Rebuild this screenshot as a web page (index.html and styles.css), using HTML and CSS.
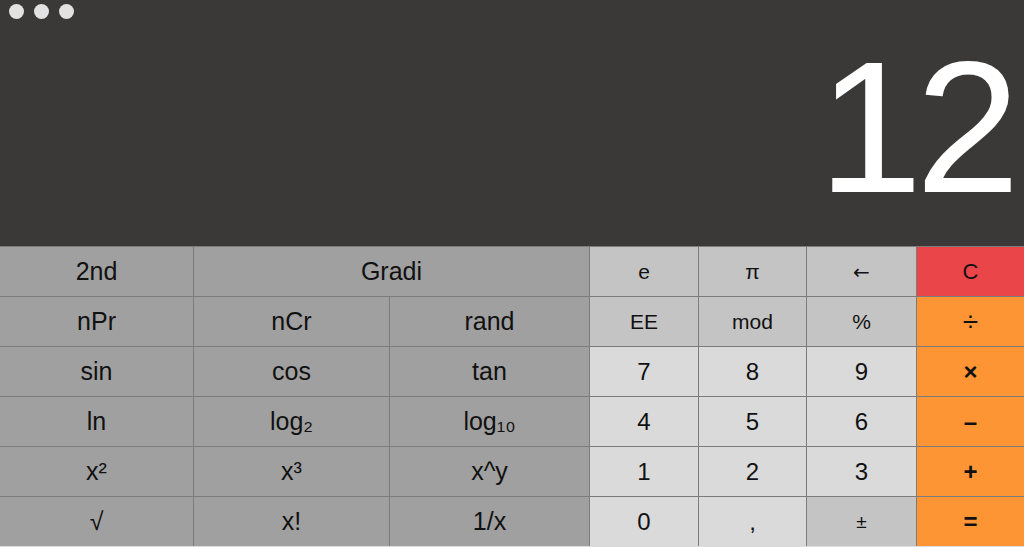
FILE: index.html
```html
<!DOCTYPE html>
<html lang="it">

<head>
    <meta charset="UTF-8">
    <meta name="viewport" content="width=device-width, initial-scale=1.0">
    <title>Calcolatrice</title>
    <link rel="stylesheet" href="styles.css">
</head>

<body>
    <div class="calc">
        <div class="display">
            <div class="dots">
                <span class="dot"></span>
                <span class="dot"></span>
                <span class="dot"></span>
            </div>
            <div class="value">12</div>
        </div>
        <div class="keys">
            <!-- riga 1 -->
            <div class="key fn">2nd</div>
            <div class="key fn wide">Gradi</div>
            <div class="key op small">e</div>
            <div class="key op small">π</div>
            <div class="key op arrow">←</div>
            <div class="key clear">C</div>
            <!-- riga 2 -->
            <div class="key fn">nPr</div>
            <div class="key fn">nCr</div>
            <div class="key fn">rand</div>
            <div class="key op small">EE</div>
            <div class="key op small">mod</div>
            <div class="key op small">%</div>
            <div class="key orange big">÷</div>
            <!-- riga 3 -->
            <div class="key fn">sin</div>
            <div class="key fn">cos</div>
            <div class="key fn">tan</div>
            <div class="key num">7</div>
            <div class="key num">8</div>
            <div class="key num">9</div>
            <div class="key orange bold">×</div>
            <!-- riga 4 -->
            <div class="key fn">ln</div>
            <div class="key fn">log₂</div>
            <div class="key fn">log₁₀</div>
            <div class="key num">4</div>
            <div class="key num">5</div>
            <div class="key num">6</div>
            <div class="key orange bold">–</div>
            <!-- riga 5 -->
            <div class="key fn">x²</div>
            <div class="key fn">x³</div>
            <div class="key fn">x^y</div>
            <div class="key num">1</div>
            <div class="key num">2</div>
            <div class="key num">3</div>
            <div class="key orange bold">+</div>
            <!-- riga 6 -->
            <div class="key fn">√</div>
            <div class="key fn">x!</div>
            <div class="key fn">1/x</div>
            <div class="key num">0</div>
            <div class="key num">,</div>
            <div class="key op tiny">±</div>
            <div class="key orange bold">=</div>
        </div>
    </div>
</body>

</html>
```

FILE: styles.css
```css
body {
    margin: 0;
    font-family: 'Liberation Sans', Arial, sans-serif;
    background: #dcdcdc;
    overflow: hidden;
}

.calc {
    width: 1024px;
    display: flex;
    flex-direction: column;
}

/* area display */
.display {
    height: 246px;
    background-color: #3a3937;
    display: flex;
    flex-direction: column;
    box-sizing: border-box;
}

.dots {
    display: flex;
    gap: 10px;
    padding: 4px 0 0 9px;
}

.dot {
    width: 15px;
    height: 15px;
    border-radius: 50%;
    background-color: #e2e2e2;
}

.value {
    margin-top: auto;
    text-align: right;
    color: #ffffff;
    font-size: 188px;
    line-height: 1;
    letter-spacing: -7px;
    padding: 0 11px 25px 0;
}

/* tastiera */
.keys {
    display: grid;
    grid-template-columns: 193px 195px 199px 108px 107px 109px 1fr;
    grid-template-rows: repeat(6, 49px);
    gap: 1px;
    padding-top: 1px;
    background-color: #7c7c7c;
}

.key {
    display: flex;
    justify-content: center;
    align-items: center;
    color: #111111;
    font-size: 25px;
}

.wide {
    grid-column: span 2;
}

.fn {
    background-color: #a0a0a0;
}

.op {
    background-color: #c4c4c4;
}

.num {
    background-color: #dadada;
    font-size: 24px;
}

.small {
    font-size: 21px;
}

.tiny {
    font-size: 19px;
}

.arrow {
    font-family: 'DejaVu Sans', sans-serif;
    font-size: 20px;
}

.clear {
    background-color: #ea4548;
    font-size: 22px;
}

.orange {
    background-color: #fd9535;
    font-size: 24px;
}

.big {
    font-size: 28px;
}

.bold {
    font-weight: bold;
}
```
